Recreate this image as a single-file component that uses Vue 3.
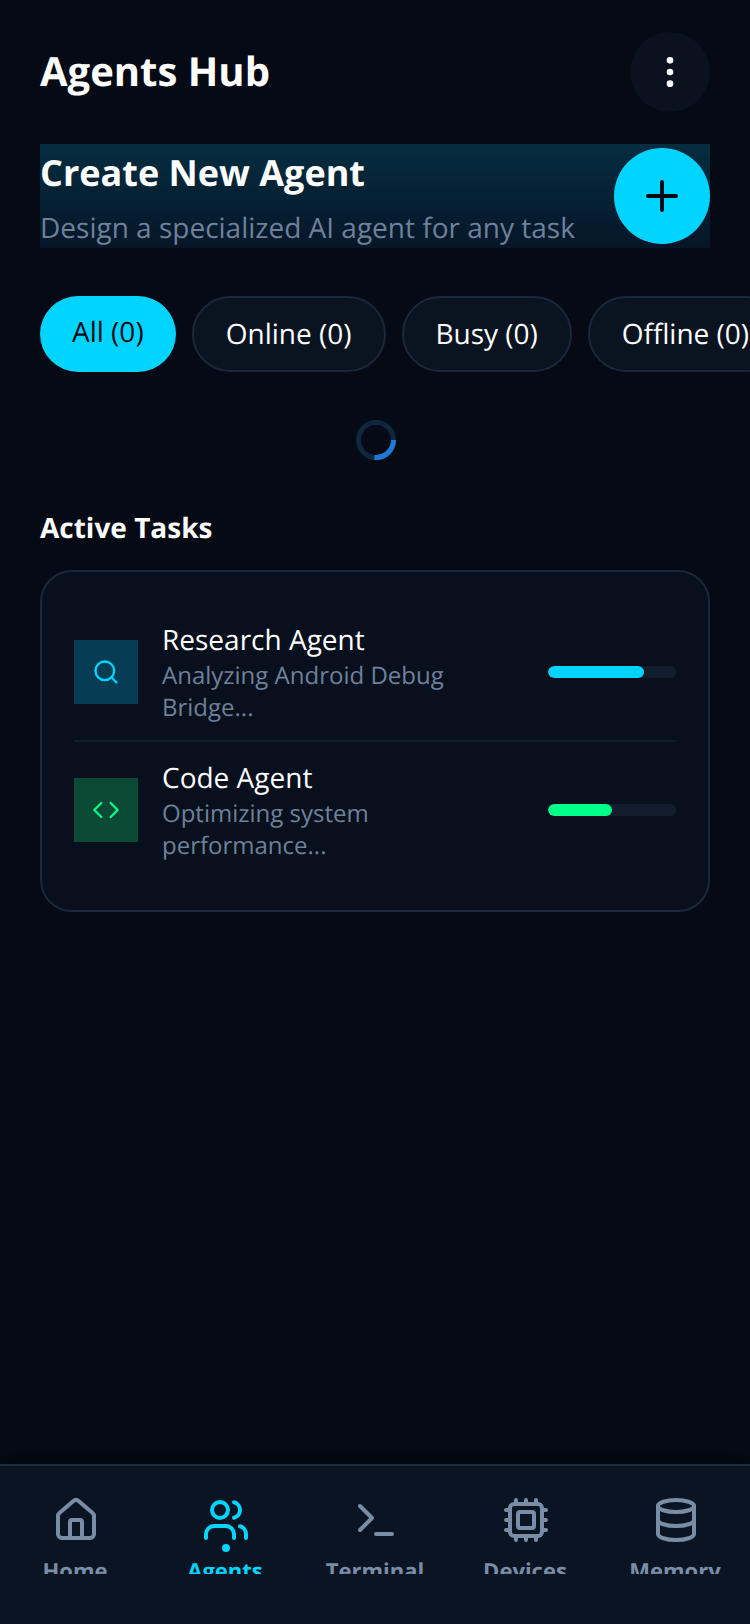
<script setup>
const chips = [
  { label: 'All (0)', active: true },
  { label: 'Online (0)' },
  { label: 'Busy (0)' },
  { label: 'Offline (0)' }
]
const tasks = [
  { name: 'Research Agent', desc: 'Analyzing Android Debug Bridge...', tone: 'cyan', pct: 75, icon: 'search' },
  { name: 'Code Agent', desc: 'Optimizing system performance...', tone: 'green', pct: 50, icon: 'code' }
]
const navItems = [
  { label: 'Home', icon: 'home' },
  { label: 'Agents', icon: 'users', active: true },
  { label: 'Terminal', icon: 'terminal' },
  { label: 'Devices', icon: 'cpu' },
  { label: 'Memory', icon: 'db' }
]
</script>

<template>
  <div class="page">
    <main class="main">
      <header class="header">
        <h1 class="title">Agents Hub</h1>
        <button class="menu-btn" aria-label="Menu">
          <svg class="ico" width="40" height="40" viewBox="0 0 24 24">
            <circle cx="12" cy="5" r="1" /><circle cx="12" cy="12" r="1" /><circle cx="12" cy="19" r="1" />
          </svg>
        </button>
      </header>

      <section class="banner">
        <div class="banner-text">
          <h2 class="banner-title">Create New Agent</h2>
          <p class="banner-sub">Design a specialized AI agent for any task</p>
        </div>
        <button class="fab" aria-label="Create">
          <svg class="ico" width="48" height="48" viewBox="0 0 24 24"><path d="M5 12h14M12 5v14" /></svg>
        </button>
      </section>

      <div class="chips">
        <div v-for="c in chips" :key="c.label" class="chip" :class="{ 'chip-active': c.active }">{{ c.label }}</div>
      </div>

      <div class="spinner-wrap">
        <svg width="40" height="40" viewBox="0 0 40 40">
          <circle cx="20" cy="20" r="17.5" fill="none" stroke="#0c2740" stroke-width="5" />
          <circle cx="20" cy="20" r="17.5" fill="none" stroke="#1f78d6" stroke-width="5" stroke-dasharray="29 200" />
        </svg>
      </div>

      <h3 class="section-title">Active Tasks</h3>

      <section class="card">
        <div v-for="t in tasks" :key="t.name" class="row">
          <div class="tile" :class="'tile-' + t.tone">
            <svg v-if="t.icon === 'search'" class="ico" width="28" height="28" viewBox="0 0 24 24">
              <circle cx="11" cy="11" r="8" /><path d="m21 21-4.3-4.3" />
            </svg>
            <svg v-else class="ico" width="28" height="28" viewBox="0 0 24 24">
              <path d="m16 18 6-6-6-6M8 6l-6 6 6 6" />
            </svg>
          </div>
          <div class="row-text">
            <div class="row-name">{{ t.name }}</div>
            <div class="row-desc">{{ t.desc }}</div>
          </div>
          <div class="track">
            <div class="fill" :class="'fill-' + t.tone" :style="{ width: t.pct + '%' }"></div>
          </div>
        </div>
      </section>
    </main>

    <nav class="nav">
      <div v-for="n in navItems" :key="n.label" class="nav-item" :class="{ 'nav-active': n.active }">
        <svg class="ico nav-ico" width="48" height="48" viewBox="0 0 24 24">
          <template v-if="n.icon === 'home'">
            <path d="M15 21v-8a1 1 0 0 0-1-1h-4a1 1 0 0 0-1 1v8" />
            <path d="M3 10a2 2 0 0 1 .709-1.528l7-5.999a2 2 0 0 1 2.582 0l7 5.999A2 2 0 0 1 21 10v9a2 2 0 0 1-2 2H5a2 2 0 0 1-2-2z" />
          </template>
          <template v-else-if="n.icon === 'users'">
            <path d="M16 21v-2a4 4 0 0 0-4-4H6a4 4 0 0 0-4 4v2" />
            <circle cx="9" cy="7" r="4" />
            <path d="M22 21v-2a4 4 0 0 0-3-3.87" />
            <path d="M16 3.13a4 4 0 0 1 0 7.75" />
          </template>
          <template v-else-if="n.icon === 'terminal'">
            <path d="m4 17 6-6-6-6" /><path d="M12 19h8" />
          </template>
          <template v-else-if="n.icon === 'cpu'">
            <path d="M12 20v2M12 2v2M17 20v2M17 2v2M2 12h2M2 17h2M2 7h2M20 12h2M20 17h2M20 7h2M7 20v2M7 2v2" />
            <rect x="4" y="4" width="16" height="16" rx="2" />
            <rect x="8" y="8" width="8" height="8" rx="1" />
          </template>
          <template v-else>
            <ellipse cx="12" cy="5" rx="9" ry="3" />
            <path d="M3 5v14a9 3 0 0 0 18 0V5" />
            <path d="M3 12a9 3 0 0 0 18 0" />
          </template>
        </svg>
        <span v-if="n.active" class="nav-dot"></span>
        <span class="nav-label">{{ n.label }}</span>
      </div>
    </nav>
  </div>
</template>

<style scoped>
.page {
  width: 750px;
  height: 1624px;
  display: flex;
  flex-direction: column;
  background: #050a15;
  font-family: "Open Sans", sans-serif;
  color: #fff;
  overflow: hidden;
  text-rendering: geometricPrecision;
}
.main {
  flex: 1;
  min-height: 0;
  padding: 32px 0 0 40px;
  overflow: hidden;
}
.ico {
  fill: none;
  stroke: currentColor;
  stroke-width: 2;
  stroke-linecap: round;
  stroke-linejoin: round;
  display: block;
  flex: none;
}
.header {
  display: flex;
  align-items: center;
  justify-content: space-between;
  width: 670px;
  height: 80px;
}
.title {
  margin: 0;
  padding-bottom: 2px;
  font-size: 40px;
  line-height: 56px;
  font-weight: 700;
}
.menu-btn {
  width: 80px;
  height: 80px;
  border: 0;
  border-radius: 50%;
  padding: 0;
  background: #0a121f;
  color: #fff;
  display: flex;
  align-items: center;
  justify-content: center;
}
.banner {
  margin-top: 32px;
  width: 670px;
  display: flex;
  justify-content: space-between;
  align-items: center;
  background: linear-gradient(180deg, #052d40 0%, #061628 100%);
}
.banner-text {
  padding: 4px 0 0;
}
.banner-title {
  margin: 0;
  font-size: 36px;
  line-height: 50px;
  font-weight: 700;
}
.banner-sub {
  margin: 10px 0 0;
  font-size: 28px;
  line-height: 40px;
  color: #6e819b;
}
.fab {
  width: 96px;
  height: 96px;
  border: 0;
  border-radius: 50%;
  padding: 0;
  background: #00d4ff;
  color: #050a15;
  display: flex;
  align-items: center;
  justify-content: center;
}
.chips {
  margin-top: 48px;
  display: flex;
  gap: 16px;
  width: 800px;
}
.chip {
  flex: none;
  box-sizing: border-box;
  padding: 17px 32px;
  font-size: 28px;
  line-height: 38px;
  border-radius: 38px;
  border: 2px solid #1b283b;
  background: #0a1420;
  text-align: center;
  white-space: nowrap;
}
.chip:nth-child(2) {
  width: 194px;
  padding-inline: 0;
}
.chip:nth-child(3) {
  width: 170px;
  padding-inline: 0;
}
.chip-active {
  border: 0;
  background: #00d4ff;
  color: #050a15;
}
.spinner-wrap {
  margin-top: 48px;
  width: 672px;
  height: 40px;
  display: flex;
  justify-content: center;
}
.section-title {
  margin: 49px 0 0;
  font-size: 28px;
  line-height: 38px;
  font-weight: 700;
}
.card {
  margin-top: 23px;
  width: 670px;
  box-sizing: border-box;
  padding: 32px;
  border: 2px solid #1b283b;
  border-radius: 32px;
  background: #08101d;
}
.row {
  display: flex;
  align-items: center;
  height: 104px;
  padding: 16px 0;
}
.row:first-child {
  border-bottom: 2px solid #131c2a;
}
.tile {
  width: 64px;
  height: 64px;
  flex: none;
  display: flex;
  align-items: center;
  justify-content: center;
}
.tile-cyan {
  background: #063d55;
  color: #00d4ff;
}
.tile-green {
  background: #0b4a35;
  color: #00ff88;
}
.row-text {
  flex: 1;
  min-width: 0;
  margin: 0 24px;
}
.row-name {
  font-size: 28px;
  line-height: 40px;
}
.row-desc {
  font-size: 24px;
  line-height: 32px;
  color: #6e819b;
}
.track {
  width: 128px;
  height: 12px;
  flex: none;
  border-radius: 6px;
  background: #141d2d;
  overflow: hidden;
}
.fill {
  height: 100%;
  border-radius: 6px;
}
.fill-cyan {
  background: #00d4ff;
}
.fill-green {
  background: #00ff88;
}
.nav {
  flex: none;
  height: 160px;
  box-sizing: border-box;
  display: grid;
  grid-template-columns: repeat(5, 150px);
  border-top: 2px solid #1a2a40;
  background: #0a1422;
  box-shadow: 0 -6px 16px rgba(0, 0, 0, 0.4);
  padding-top: 30px;
  position: relative;
}
.nav-item {
  position: relative;
  height: 78px;
  overflow: hidden;
  display: flex;
  flex-direction: column;
  align-items: center;
  color: #7a8da6;
}
.nav-ico {
  margin-left: 2px;
}
.nav-active {
  color: #00d4ff;
}
.nav-dot {
  position: absolute;
  top: 48px;
  left: 72px;
  width: 8px;
  height: 8px;
  border-radius: 50%;
  background: #00d4ff;
}
.nav-label {
  margin-top: 12px;
  font-size: 22px;
  line-height: 30px;
  font-weight: 700;
}
</style>
